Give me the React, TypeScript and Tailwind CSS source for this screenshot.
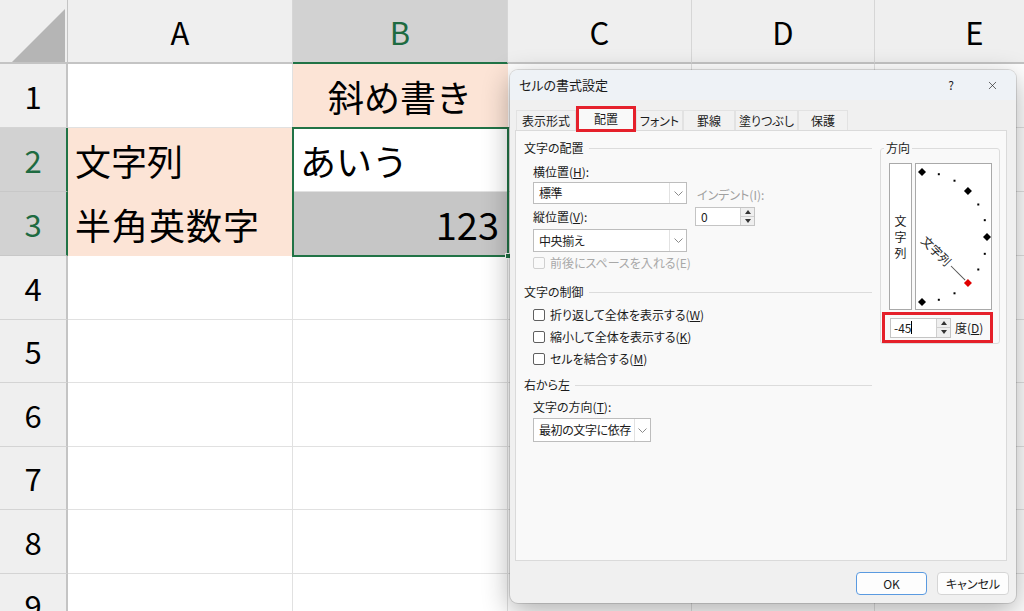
import { X } from "lucide-react";

type Fill = "none" | "peach" | "gray";

function Cell({
  w,
  fill = "none",
  align = "left",
  children,
}: {
  w: string;
  fill?: Fill;
  align?: "left" | "center" | "right";
  children?: React.ReactNode;
}) {
  const bg =
    fill === "peach"
      ? "bg-[#fce4d6] border-[#fce4d6]"
      : fill === "gray"
      ? "bg-[#c6c6c6] border-[#c6c6c6]"
      : "bg-white border-[#e1e1e1]";
  const al =
    align === "center"
      ? "justify-center"
      : align === "right"
      ? "justify-end pr-[8px]"
      : "justify-start pl-[7px]";
  return (
    <div
      className={`${w} shrink-0 h-full border-r border-b flex items-center text-[36px] leading-none ${bg} ${al}`}
    >
      {children}
    </div>
  );
}

const cols = [
  { name: "A", w: "w-[225px]" },
  { name: "B", w: "w-[215px]", sel: true },
  { name: "C", w: "w-[184px]" },
  { name: "D", w: "w-[183px]" },
  { name: "E", w: "w-[200px]" },
];

const rows = [
  { n: "1", h: "h-[64px]" },
  { n: "2", h: "h-[64px]", sel: true },
  { n: "3", h: "h-[64px]", sel: true },
  { n: "4", h: "h-[63.5px]" },
  { n: "5", h: "h-[63.5px]" },
  { n: "6", h: "h-[63.5px]" },
  { n: "7", h: "h-[63.5px]" },
  { n: "8", h: "h-[63.5px]" },
  { n: "9", h: "h-[63.5px]" },
];

function Sheet() {
  return (
    <div className="relative">
      <div className="flex h-[64px] bg-[#efefef]">
        <div className="w-[68px] shrink-0 border-r border-[#c4c4c4] border-b-2 border-b-[#c4c4c4] flex items-end justify-end pr-[2px]">
          <svg width="53" height="53" viewBox="0 0 53 53">
            <path d="M0 53 L53 53 L53 0 Z" fill="#b5b5b5" />
          </svg>
        </div>
        {cols.map((c) => (
          <div
            key={c.name}
            className={
              c.sel
                ? `${c.w} shrink-0 flex items-center justify-center text-[31px] leading-none bg-[#d2d2d2] text-[#1e6b41] border-r border-[#d6d6d6] border-b-2 border-b-[#217346]`
                : `${c.w} shrink-0 flex items-center justify-center text-[31px] leading-none border-r border-[#d6d6d6] border-b-2 border-b-[#c4c4c4]`
            }
          >
            {c.name}
          </div>
        ))}
      </div>
      {rows.map((r) => (
        <div key={r.n} className={`flex ${r.h}`}>
          <div
            className={
              r.sel
                ? "w-[68px] shrink-0 flex items-center justify-center text-[31px] leading-none bg-[#d2d2d2] text-[#1e6b41] border-b border-[#c8c8c8] border-r-2 border-r-[#217346]"
                : "w-[68px] shrink-0 flex items-center justify-center text-[31px] leading-none bg-[#efefef] border-b border-[#d4d4d4] border-r-2 border-r-[#c4c4c4]"
            }
          >
            {r.n}
          </div>
          {r.n === "1" && (
            <>
              <Cell w="w-[225px]" />
              <Cell w="w-[215px]" fill="peach" align="center">
                斜め書き
              </Cell>
            </>
          )}
          {r.n === "2" && (
            <>
              <Cell w="w-[225px]" fill="peach">
                文字列
              </Cell>
              <Cell w="w-[215px]">あいう</Cell>
            </>
          )}
          {r.n === "3" && (
            <>
              <Cell w="w-[225px]" fill="peach">
                <span className="tracking-[1px]">半角英数字</span>
              </Cell>
              <Cell w="w-[215px]" fill="gray" align="right">
                <span className="text-[38px]">123</span>
              </Cell>
            </>
          )}
          {!["1", "2", "3"].includes(r.n) && (
            <>
              <Cell w="w-[225px]" />
              <Cell w="w-[215px]" />
            </>
          )}
          <Cell w="w-[184px]" />
          <Cell w="w-[183px]" />
          <Cell w="w-[200px]" />
        </div>
      ))}
      {/* selection B2:B3 */}
      <div className="absolute left-[292px] top-[127px] w-[217px] h-[130px] border-2 border-[#217346]">
        <div className="absolute right-[-4px] bottom-[-4px] w-[6px] h-[6px] bg-[#217346] border border-white" />
      </div>
    </div>
  );
}

function Chevron() {
  return (
    <svg width="9" height="5" viewBox="0 0 9 5">
      <path d="M0.5 0.5 L4.5 4.5 L8.5 0.5" fill="none" stroke="#8a8a8a" strokeWidth="1" />
    </svg>
  );
}

function Select({ value, className, arrow }: { value: string; className: string; arrow: string }) {
  return (
    <div className={`flex border border-[#bdbdbd] bg-white ${className}`}>
      <span className="flex-1 flex items-center pl-[5px] whitespace-nowrap overflow-hidden tracking-[-0.4px]">
        {value}
      </span>
      <span className={`${arrow} shrink-0 flex items-center justify-center border-l border-[#e2e2e2]`}>
        <Chevron />
      </span>
    </div>
  );
}

function Spinner() {
  return (
    <div className="w-[14px] h-full flex flex-col border-l border-[#cfcfcf] bg-[#efefef]">
      <div className="flex-1 flex items-center justify-center border-b border-[#cfcfcf]">
        <svg width="6" height="4" viewBox="0 0 6 4">
          <path d="M3 0 L6 4 L0 4 Z" fill="#333" />
        </svg>
      </div>
      <div className="flex-1 flex items-center justify-center">
        <svg width="6" height="4" viewBox="0 0 6 4">
          <path d="M0 0 L6 0 L3 4 Z" fill="#333" />
        </svg>
      </div>
    </div>
  );
}

function Check({ children, disabled, className = "" }: { children: React.ReactNode; disabled?: boolean; className?: string }) {
  return (
    <div className={`flex items-center h-[14px] gap-[5px] ${className}`}>
      <div
        className={
          disabled
            ? "w-[12px] h-[12px] rounded-[2px] border border-[#d0d0d0] bg-[#fafafa]"
            : "w-[12px] h-[12px] rounded-[2px] border border-[#5f5f5f] bg-white"
        }
      />
      <span className={disabled ? "text-[#a8a8a8]" : ""}>{children}</span>
    </div>
  );
}

function GroupHead({ label, className = "" }: { label: string; className?: string }) {
  return (
    <div className={`flex items-center gap-[5px] h-[14px] ${className}`}>
      <span>{label}</span>
      <div className="flex-1 h-px bg-[#dcdcdc]" />
    </div>
  );
}

function Dial() {
  const cx = 6;
  const cy = 73;
  const r = 65;
  const marks: { a: number; x: number; y: number; big: boolean }[] = [];
  for (let a = 90; a >= -90; a -= 15) {
    const rad = (a * Math.PI) / 180;
    marks.push({ a, x: cx + r * Math.cos(rad), y: cy - r * Math.sin(rad), big: a % 45 === 0 });
  }
  return (
    <svg width="75" height="145" viewBox="0 0 75 145">
      <g transform={`rotate(45 ${cx} ${cy})`}>
        <text x={cx + 2} y={cy + 4.5} fontSize="12" fill="#222">
          文字列
        </text>
        <line x1={cx + 41} y1={cy} x2={cx + 61} y2={cy} stroke="#555" strokeWidth="1" />
      </g>
      {marks.map((m) =>
        m.big ? (
          <path
            key={m.a}
            d={`M${m.x} ${m.y - 4} L${m.x + 4} ${m.y} L${m.x} ${m.y + 4} L${m.x - 4} ${m.y} Z`}
            fill={m.a === -45 ? "#e00000" : "#000"}
          />
        ) : (
          <rect key={m.a} x={m.x - 1} y={m.y - 1} width="2" height="2" fill="#000" />
        )
      )}
    </svg>
  );
}

const tabs = [
  { label: "表示形式", w: "w-[60px]" },
  { label: "配置", w: "w-[60px]", active: true },
  { label: "フォント", w: "w-[47px]" },
  { label: "罫線", w: "w-[52px]" },
  { label: "塗りつぶし", w: "w-[63px]" },
  { label: "保護", w: "w-[50px]" },
];

function Dialog() {
  return (
    <div className="absolute left-[510px] top-[70px] w-[506px] h-[533px] rounded-[8px] bg-[#f0f0f0] shadow-[0_0_0_1px_rgba(0,0,0,0.12),0_8px_28px_rgba(0,0,0,0.32)] flex flex-col overflow-hidden text-[12px] leading-[14px] text-[#1b1b1b] [font-feature-settings:'palt']">
      <div className="h-[30px] shrink-0 bg-[#eef2f6] flex items-center pl-[9px]">
        <span className="text-[13px]">セルの書式設定</span>
        <span className="ml-auto text-[12px]">?</span>
        <X className="ml-[32px] mr-[17px]" size={13} strokeWidth={1.2} />
      </div>
      <div className="mt-[6px] h-[24px] shrink-0 flex items-end pl-[6px]">
        {tabs.map((t) => (
          <div
            key={t.label}
            className={
              t.active
                ? `${t.w} h-[26px] mb-[-2px] relative z-10 border-[3px] border-[#e5202a] bg-[#f9f9f9] flex items-center justify-center`
                : `${t.w} h-[20px] border border-b-0 border-[#e2e2e2] bg-[#f1f1f1] flex items-center justify-center`
            }
          >
            {t.label}
          </div>
        ))}
      </div>
      <div className="ml-[5px] mr-[9px] h-[431px] shrink-0 border border-[#dadada] bg-[#f9f9f9] flex items-start pl-[8px] pt-[10px] gap-[8px]">
        <div className="w-[348px] shrink-0">
          <GroupHead label="文字の配置" />
          <div className="pl-[9px]">
            <div className="flex">
              <div className="w-[154px]">
                <div className="mt-[10px]">
                  横位置(<span className="underline">H</span>):
                </div>
                <Select className="mt-[3px] w-[154px] h-[22px]" arrow="w-[17px]" value="標準" />
                <div className="mt-[6px]">
                  縦位置(<span className="underline">V</span>):
                </div>
                <Select className="mt-[5px] w-[154px] h-[23px]" arrow="w-[17px]" value="中央揃え" />
              </div>
              <div className="ml-[8px] pt-[33px]">
                <div className="text-[#a0a0a0] pl-[2px]">インデント(I):</div>
                <div className="mt-[5px] w-[60px] h-[19px] flex border border-[#c4c4c4] bg-white">
                  <span className="flex-1 pl-[5px] flex items-center">0</span>
                  <Spinner />
                </div>
              </div>
            </div>
            <Check disabled className="mt-[4px]">
              前後にスペースを入れる(E)
            </Check>
          </div>
          <GroupHead className="mt-[15px]" label="文字の制御" />
          <div className="pl-[9px]">
            <Check className="mt-[9px]">
              折り返して全体を表示する(<span className="underline">W</span>)
            </Check>
            <Check className="mt-[8px]">
              縮小して全体を表示する(<span className="underline">K</span>)
            </Check>
            <Check className="mt-[8px]">
              セルを結合する(<span className="underline">M</span>)
            </Check>
          </div>
          <GroupHead className="mt-[12px]" label="右から左" />
          <div className="pl-[9px]">
            <div className="mt-[8px]">
              文字の方向(<span className="underline">T</span>):
            </div>
            <Select className="mt-[4px] w-[118px] h-[24px]" arrow="w-[16px]" value="最初の文字に依存" />
          </div>
        </div>
        <fieldset className="w-[120px] border border-[#dcdcdc] rounded-[3px]">
          <legend className="ml-[3px] px-[2px] leading-[14px]">方向</legend>
          <div className="flex gap-[3px] pl-[8px] mt-[8px]">
            <div className="w-[23px] h-[147px] border border-[#a9a9a9] bg-white flex flex-col items-center justify-center leading-[16px]">
              <span>文</span>
              <span>字</span>
              <span>列</span>
            </div>
            <div className="w-[77px] h-[147px] border border-[#a9a9a9] bg-white">
              <Dial />
            </div>
          </div>
          <div className="mt-[2px] ml-[1px] w-[111px] h-[31px] border-[3px] border-[#e5202a] flex items-center pl-[5px]">
            <div className="w-[61px] h-[20px] flex border border-[#c4c4c4] bg-white">
              <span className="flex-1 pl-[3px] flex items-center">
                -45<span className="w-px h-[13px] bg-black" />
              </span>
              <Spinner />
            </div>
            <span className="ml-[4px]">
              度(<span className="underline">D</span>)
            </span>
          </div>
        </fieldset>
      </div>
      <div className="flex justify-end gap-[10px] pr-[7px] pt-[11px]">
        <button className="w-[71px] h-[23px] rounded-[4px] border border-[#5a9ae0] bg-[#fdfdfd] text-[12px]">
          OK
        </button>
        <button className="w-[72px] h-[23px] rounded-[4px] border border-[#d5d5d5] bg-[#fdfdfd] text-[12px]">
          キャンセル
        </button>
      </div>
    </div>
  );
}

export default function App() {
  return (
    <div className="relative w-[1024px] h-[611px] overflow-hidden bg-white font-['Noto_Sans_CJK_JP','Noto_Sans',sans-serif] text-black">
      <Sheet />
      <Dialog />
    </div>
  );
}
